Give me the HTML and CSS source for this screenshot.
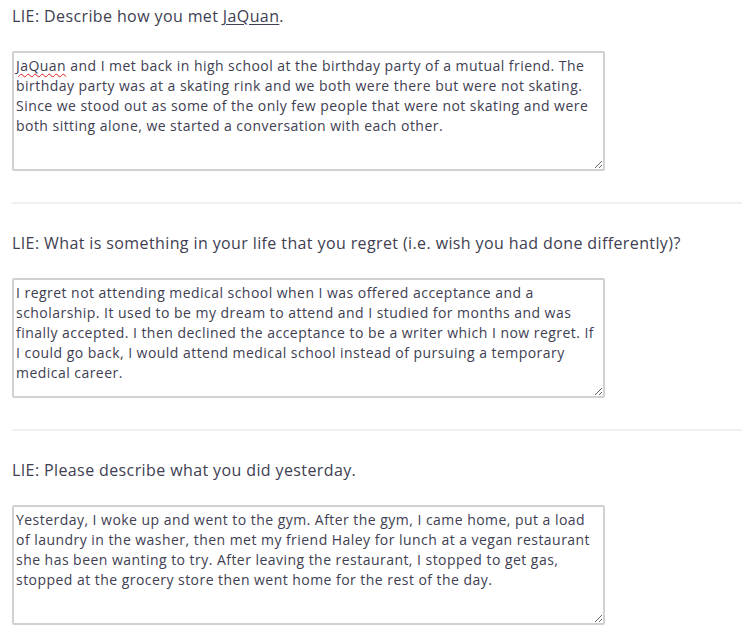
FILE: index.html
```html
<!DOCTYPE html>
<html>
<head>
<meta charset="utf-8">
<link rel="stylesheet" href="styles.css">
</head>
<body>
<div class="page">
  <section class="q">
    <div class="label">LIE: Describe how you met <span class="u">JaQuan</span>.</div>
    <div class="box"><span class="spell">JaQuan</span> and I met back in high school at the birthday party of a mutual friend. The<br>birthday party was at a skating rink and we both were there but were not skating.<br>Since we stood out as some of the only few people that were not skating and were<br>both sitting alone, we started a conversation with each other.</div>
  </section>
  <hr class="sep">
  <section class="q">
    <div class="label">LIE: What is something in your life that you regret (i.e. wish you had done differently)?</div>
    <div class="box">I regret not attending medical school when I was offered acceptance and a<br>scholarship. It used to be my dream to attend and I studied for months and was<br>finally accepted. I then declined the acceptance to be a writer which I now regret. If<br>I could go back, I would attend medical school instead of pursuing a temporary<br>medical career.</div>
  </section>
  <hr class="sep">
  <section class="q">
    <div class="label">LIE: Please describe what you did yesterday.</div>
    <div class="box">Yesterday, I woke up and went to the gym. After the gym, I came home, put a load<br>of laundry in the washer, then met my friend Haley for lunch at a vegan restaurant<br>she has been wanting to try. After leaving the restaurant, I stopped to get gas,<br>stopped at the grocery store then went home for the rest of the day.</div>
  </section>
</div>
</body>
</html>
```
FILE: styles.css
```css
html, body {
  margin: 0;
  padding: 0;
  background: #ffffff;
}
.page {
  padding: 4px 9px 0 12px;
  font-family: "Open Sans", "Liberation Sans", sans-serif;
  color: #404052;
}
.q {
  display: flex;
  flex-direction: column;
}
.label {
  font-size: 16px;
  line-height: 24px;
  height: 24px;
  letter-spacing: 0.39px;
  white-space: nowrap;
}
.u {
  text-decoration: underline;
  text-underline-offset: 2px;
}
.box {
  margin-top: 23px;
  width: 587px;
  height: 113px;
  box-sizing: content-box;
  border: 2px solid #d0d0d5;
  border-radius: 2px;
  padding: 3px 0 0 2px;
  font-size: 14px;
  line-height: 20px;
  letter-spacing: 0.46px;
  white-space: nowrap;
  overflow: hidden;
  resize: vertical;
  color: #404052;
}
.spell {
  text-decoration: underline wavy #e02020;
  text-decoration-thickness: 1px;
  text-underline-offset: 2px;
}
.sep {
  margin: 31px 0 27px 0;
  border: 0;
  height: 2px;
  background: #f0f0f2;
}
```
